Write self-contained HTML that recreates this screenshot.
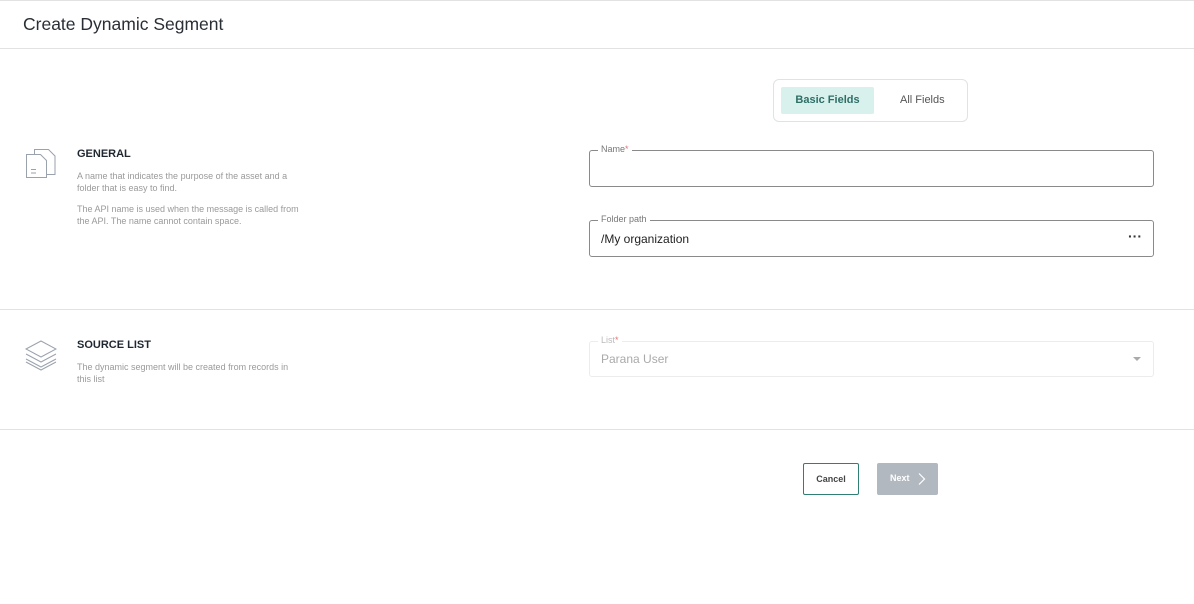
<!DOCTYPE html>
<html><head><style>
*{box-sizing:border-box;margin:0;padding:0}
body{width:1194px;height:604px;background:#fff;font-family:"Liberation Sans",sans-serif;position:relative;overflow:hidden;color:#333}
.abs{position:absolute}
.hr{position:absolute;left:0;width:1194px;height:1px;background:#e2e2e2}
.title{left:23px;top:14px;font-size:17.5px;color:#2a2f36}
.h{font-size:11px;font-weight:bold;color:#1f2730}
.d{font-size:9px;color:#9a9a9a;line-height:12px}
.field{position:absolute;left:589px;width:565px;border:1px solid #8a8a8a;border-radius:3px}
.lbl{position:absolute;left:8px;top:-7px;background:#fff;padding:0 3px;font-size:9px;color:#777}
</style></head><body>
<div class="hr" style="top:0"></div>
<div class="abs title">Create Dynamic Segment</div>
<div class="hr" style="top:48px"></div>

<div class="abs" style="left:773px;top:79px;width:195px;height:43px;border:1px solid #e2e2e2;border-radius:6px"></div>
<div class="abs" style="left:781px;top:87px;width:93px;height:27px;background:#d8f1ec;border-radius:2px;font-size:11px;font-weight:bold;color:#2f6e67;text-align:center;line-height:27px">Basic Fields</div>
<div class="abs" style="left:900px;top:87px;font-size:11px;color:#555;line-height:27px">All Fields</div>

<svg class="abs" style="left:25px;top:147px" width="32" height="33" viewBox="0 0 32 33" fill="none" stroke="#9aa2ad" stroke-width="1"><path d="M9.5 7V2.5h14l6.5 6.5v18.5h-8.5"/><path d="M1.5 7.5h14l6 6v17h-20z"/><path d="M6 22.5h5M6 26h5"/></svg>
<div class="abs h" style="left:77px;top:148px">GENERAL</div>
<div class="abs d" style="left:77px;top:170px;width:228px">A name that indicates the purpose of the asset and a folder that is easy to find.</div>
<div class="abs d" style="left:77px;top:203px;width:236px">The API name is used when the message is called from the API. The name cannot contain space.</div>

<div class="field" style="top:150px;height:37px"><span class="lbl">Name<span style="color:#e57373">*</span></span></div>
<div class="field" style="top:220px;height:37px"><span class="lbl">Folder path</span><span class="abs" style="left:11px;top:11px;font-size:12px;color:#222">/My organization</span><span class="abs" style="right:11px;top:7px;font-size:14px;font-weight:bold;color:#333">···</span></div>

<div class="hr" style="top:309px"></div>

<svg class="abs" style="left:25px;top:339px" width="32" height="34" viewBox="0 0 32 34" fill="none" stroke="#9aa2ad" stroke-width="1"><path d="M1 10l15-8 15 8-15 8z"/><path d="M1 15l15 8 15-8"/><path d="M1 20l15 8 15-8"/><path d="M1 25l15 8 15-8" transform="translate(0,-2)"/></svg>
<div class="abs h" style="left:77px;top:339px">SOURCE LIST</div>
<div class="abs d" style="left:77px;top:361px;width:222px">The dynamic segment will be created from records in this list</div>

<div class="abs" style="left:589px;top:341px;width:565px;height:36px;border:1px solid #ececec;border-radius:3px"><span class="lbl" style="color:#bbb">List<span style="color:#e57373">*</span></span><span class="abs" style="left:11px;top:10px;font-size:12px;color:#aaa">Parana User</span><span class="abs" style="right:12px;top:15px;width:0;height:0;border-left:4px solid transparent;border-right:4px solid transparent;border-top:4px solid #aaa"></span></div>

<div class="hr" style="top:429px"></div>

<div class="abs" style="left:803px;top:463px;width:56px;height:32px;border:1px solid #2f7f74;border-radius:2px;font-size:9px;font-weight:bold;color:#444;text-align:center;line-height:30px">Cancel</div>
<div class="abs" style="left:877px;top:463px;width:61px;height:32px;background:#b2b8bf;border-radius:2px;font-size:9px;font-weight:bold;color:#fff;line-height:30px;padding-left:13px">Next<svg style="position:absolute;left:41px;top:10px" width="8" height="12" viewBox="0 0 8 12" fill="none" stroke="#fff" stroke-width="1.2"><path d="M1 0.5l5.5 5.5-5.5 5.5"/></svg></div>
</body></html>
